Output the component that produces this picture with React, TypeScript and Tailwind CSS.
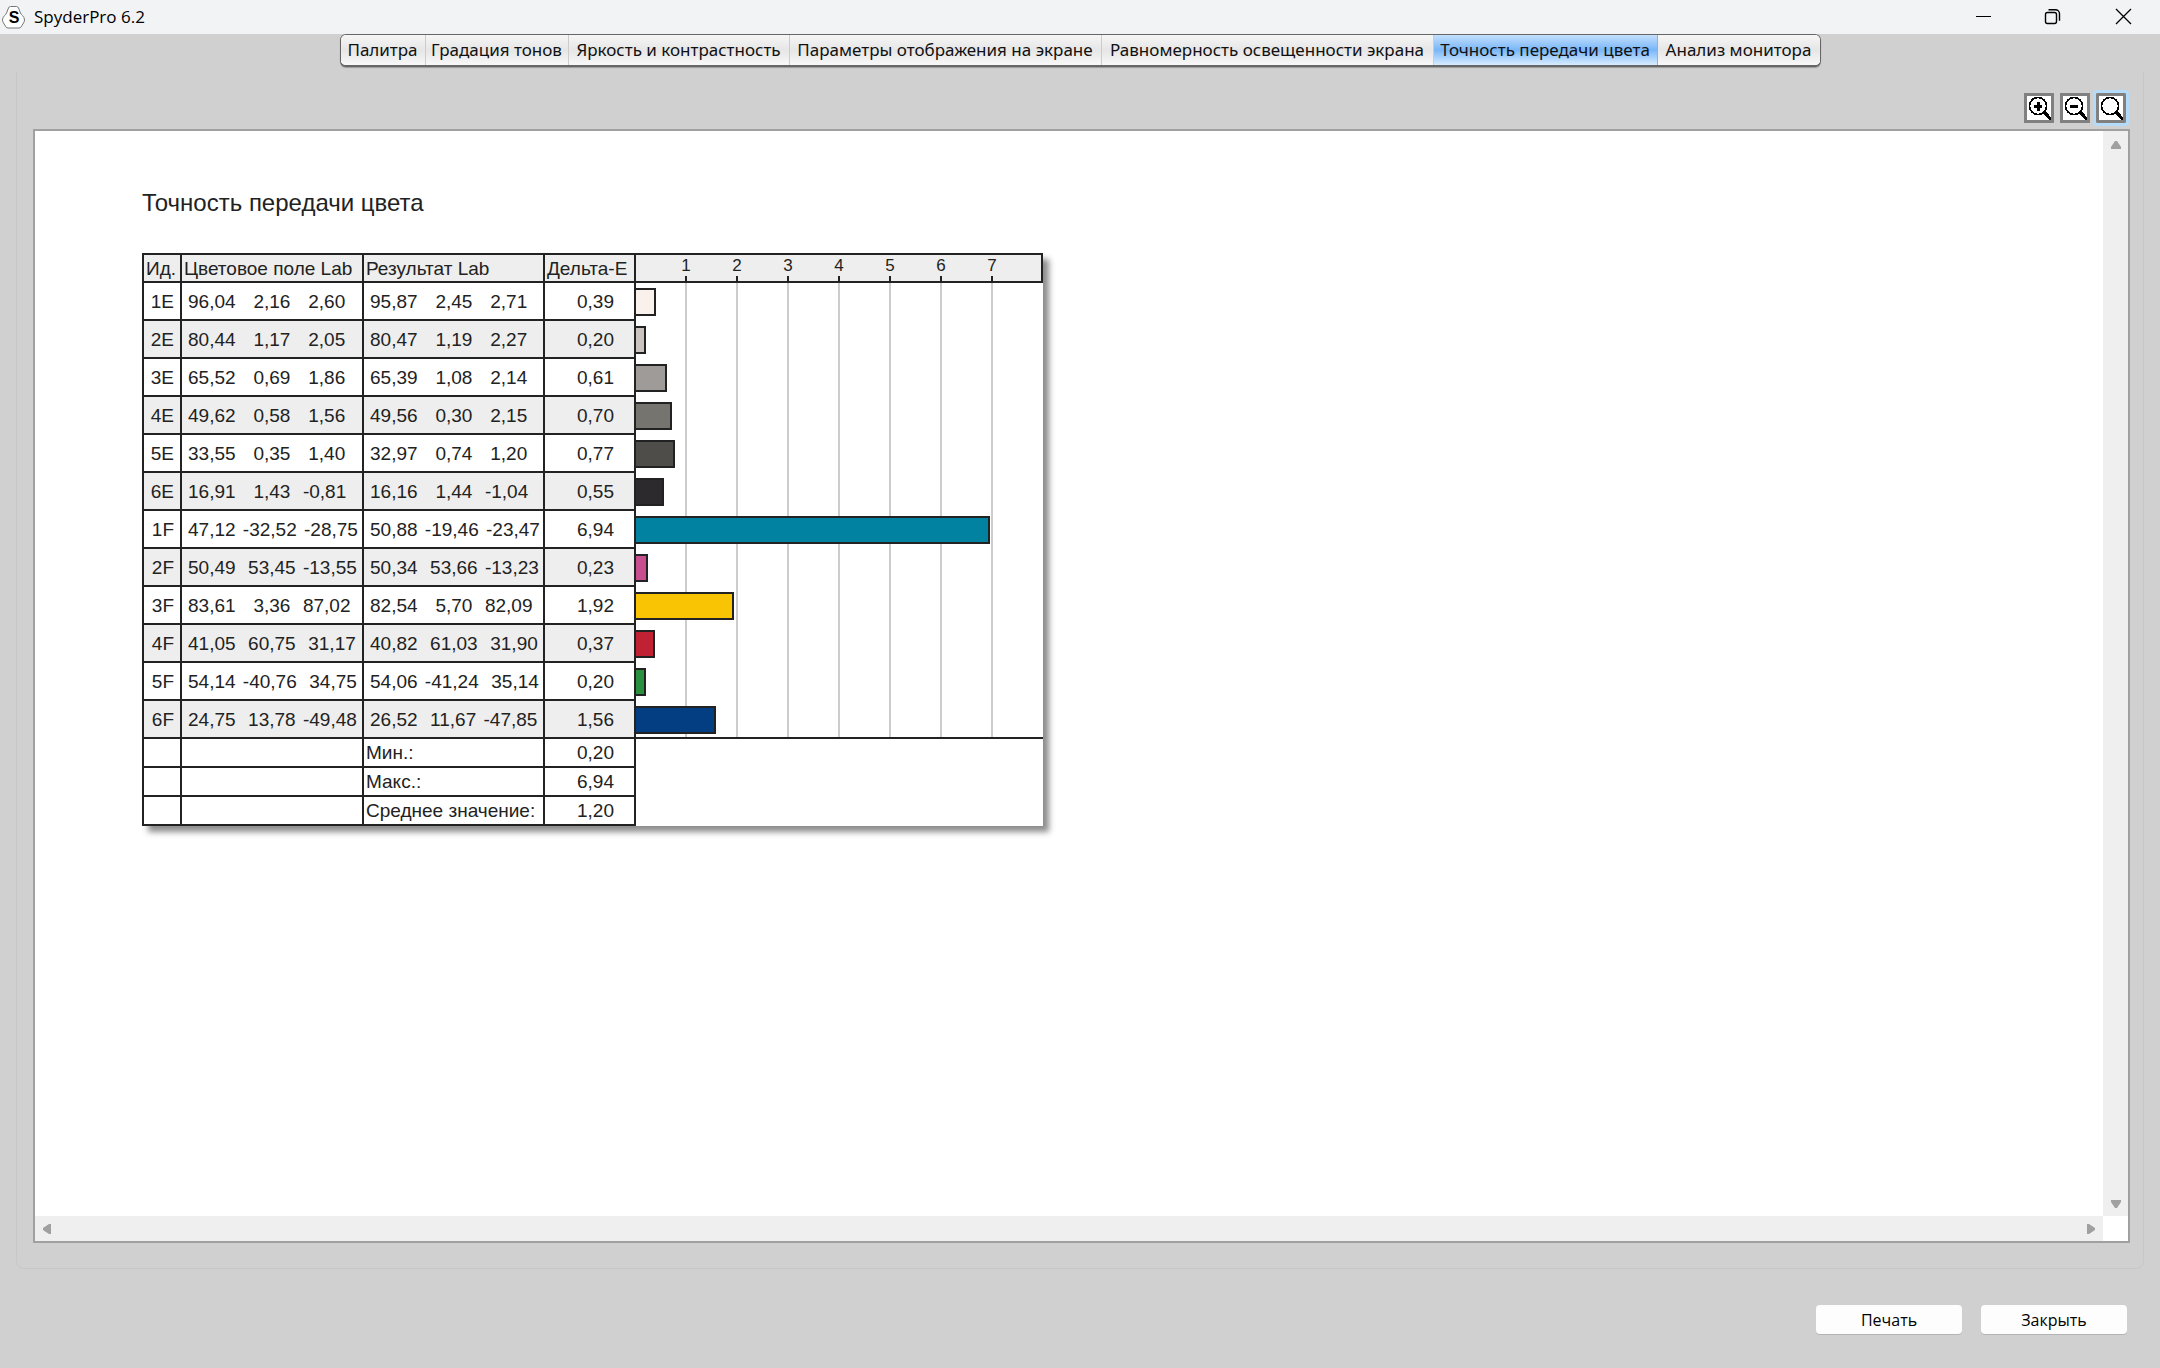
import React from 'react';

const tabs = [
  { label: 'Палитра', width: 'w-[85px]' },
  { label: 'Градация тонов', width: 'w-[143px]' },
  { label: 'Яркость и контрастность', width: 'w-[221px]' },
  { label: 'Параметры отображения на экране', width: 'w-[312px]' },
  { label: 'Равномерность освещенности экрана', width: 'w-[332px]' },
  { label: 'Точность передачи цвета', width: 'w-[224px]', active: true },
  { label: 'Анализ монитора', width: 'w-[162px]' },
];

const rows = [
  { id: '1E', source: ['96,04', '  2,16', '  2,60'], result: ['95,87', '  2,45', '  2,71'], delta: 0.39, color: '#faf0ec' },
  { id: '2E', source: ['80,44', '  1,17', '  2,05'], result: ['80,47', '  1,19', '  2,27'], delta: 0.2, color: '#c9c4c1' },
  { id: '3E', source: ['65,52', '  0,69', '  1,86'], result: ['65,39', '  1,08', '  2,14'], delta: 0.61, color: '#9f9b98' },
  { id: '4E', source: ['49,62', '  0,58', '  1,56'], result: ['49,56', '  0,30', '  2,15'], delta: 0.7, color: '#75746f' },
  { id: '5E', source: ['33,55', '  0,35', '  1,40'], result: ['32,97', '  0,74', '  1,20'], delta: 0.77, color: '#4e4d4a' },
  { id: '6E', source: ['16,91', '  1,43', ' -0,81'], result: ['16,16', '  1,44', ' -1,04'], delta: 0.55, color: '#2d2a2e' },
  { id: '1F', source: ['47,12', '-32,52', '-28,75'], result: ['50,88', '-19,46', '-23,47'], delta: 6.94, color: '#0082a0' },
  { id: '2F', source: ['50,49', ' 53,45', '-13,55'], result: ['50,34', ' 53,66', '-13,23'], delta: 0.23, color: '#c74e8f' },
  { id: '3F', source: ['83,61', '  3,36', ' 87,02'], result: ['82,54', '  5,70', ' 82,09'], delta: 1.92, color: '#f9c404' },
  { id: '4F', source: ['41,05', ' 60,75', ' 31,17'], result: ['40,82', ' 61,03', ' 31,90'], delta: 0.37, color: '#c02234' },
  { id: '5F', source: ['54,14', '-40,76', ' 34,75'], result: ['54,06', '-41,24', ' 35,14'], delta: 0.2, color: '#2b8f40' },
  { id: '6F', source: ['24,75', ' 13,78', '-49,48'], result: ['26,52', ' 11,67', '-47,85'], delta: 1.56, color: '#043e82' },
];

const summary = [
  { label: 'Мин.:', value: '0,20' },
  { label: 'Макс.:', value: '6,94' },
  { label: 'Среднее значение:', value: '1,20' },
];

const UNIT = 51;
const ROW = 38;
const HEAD = 29;

const format = (n: number) => n.toFixed(2).replace('.', ',');

function LabValues({ values }: { values: string[] }) {
  return (
    <div className="flex gap-0.5 whitespace-pre">
      <span>{values[0]}</span>
      <span> {values[1]}</span>
      <span> {values[2]}</span>
    </div>
  );
}

function Logo() {
  return (
    <svg className="w-6 h-6" viewBox="0 0 24 24">
      <path d="M8.500 1.500h6q1.500 0 2 1.500l2 5q.5 1.200 2 2.600 2 1.900 2 4.400 0 1.500-1 3l-2.500 4q-.5 1-2 1h-11q-1.500 0-2-1l-2.500-4q-1-1.500-1-3 0-2.500 2-4.400 1.500-1.400 2-2.600l2-5q.5-1.500 2-1.500z" fill="#fff" stroke="#777" />
      <text x="12" y="18" textAnchor="middle" className="font-bold text-[16px] font-['Liberation_Sans']" fill="#000">S</text>
    </svg>
  );
}

function ZoomIcon({ kind }: { kind: 'in' | 'out' | 'reset' }) {
  return (
    <svg className="w-6 h-6" viewBox="0 0 24 24" shapeRendering="crispEdges">
      <circle cx="11" cy="10" r="8.500" fill="none" stroke="#000" strokeWidth="1.600" />
      <path d="M16.500 15.500l8 8.500" stroke="#000" strokeWidth="3.200" />
      {kind !== 'reset' && <path d="M7 9h8v3h-8z" fill="#000" />}
      {kind === 'in' && <path d="M10 6h3v9h-3z" fill="#000" />}
    </svg>
  );
}

function DeltaChart() {
  const bottom = HEAD + rows.length * ROW;
  return (
    <svg className="block shrink-0" width="407" height="573" viewBox="0 0 407 573" fontFamily="Liberation Sans, sans-serif">
      <rect width="407" height="573" fill="#fff" />
      <rect x="-2" y="1" width="408" height="28" fill="#eee" stroke="#222" strokeWidth="2" />
      {[1, 2, 3, 4, 5, 6, 7].map(n => (
        <g key={n}>
          <rect x={n * UNIT - 2} y={HEAD + 1} width="2" height={bottom - HEAD} fill="#ccc" />
          <rect x={n * UNIT - 2} y="23" width="2" height="6" fill="#222" />
          <text x={n * UNIT - 1} y="18" textAnchor="middle" fontSize="17" fill="#222">{n}</text>
        </g>
      ))}
      {rows.map((row, i) => (
        <rect
          key={row.id}
          x="-1"
          y={HEAD + i * ROW + 7}
          width={Math.round(row.delta * UNIT)}
          height="26"
          fill={row.color}
          stroke="#222"
          strokeWidth="2"
        />
      ))}
      <rect y={bottom - 1} width="407" height="2" fill="#222" />
    </svg>
  );
}

function ResultTable() {
  return (
    <table className="table-fixed border-collapse w-[492px] shrink-0 text-[19px] leading-[22px] text-[#222] [&_td]:border-2 [&_th]:border-2 [&_td]:border-[#222] [&_th]:border-[#222] [&_td]:p-0 [&_th]:p-0">
      <colgroup>
        <col className="w-[38px]" />
        <col className="w-[182px]" />
        <col className="w-[181px]" />
        <col className="w-[91px]" />
      </colgroup>
      <thead>
        <tr className="h-[28px] bg-[#eee] text-left whitespace-nowrap [&_th]:font-normal">
          <th><div className="pl-0.5 pt-0.5">Ид.</div></th>
          <th><div className="pl-0.5 pt-0.5">Цветовое поле Lab</div></th>
          <th><div className="pl-0.5 pt-0.5">Результат Lab</div></th>
          <th><div className="pl-0.5 pt-0.5">Дельта-E</div></th>
        </tr>
      </thead>
      <tbody>
        {rows.map(row => (
          <tr key={row.id} className="h-[38px] even:bg-[#eee]">
            <td><div className="pt-0.5 pr-1.5 text-right">{row.id}</div></td>
            <td><div className="pt-0.5 pl-1.5"><LabValues values={row.source} /></div></td>
            <td><div className="pt-0.5 pl-1.5"><LabValues values={row.result} /></div></td>
            <td><div className="pt-0.5 pr-5 text-right">{format(row.delta)}</div></td>
          </tr>
        ))}
        {summary.map(item => (
          <tr key={item.label} className="h-[29px]">
            <td></td>
            <td></td>
            <td><div className="pl-0.5 whitespace-nowrap">{item.label}</div></td>
            <td><div className="pr-5 text-right">{item.value}</div></td>
          </tr>
        ))}
      </tbody>
    </table>
  );
}

function TitleBar() {
  return (
    <header className="h-[34px] bg-[#f1f3f4] flex items-center justify-between pl-0.5 pr-[27px]">
      <div className="flex items-center gap-2">
        <Logo />
        <h1 className="font-['Open_Sans',sans-serif] text-[17px] text-black">SpyderPro 6.2</h1>
      </div>
      <div className="flex gap-[50px]">
        <button aria-label="Свернуть" className="w-5 h-5">
          <svg viewBox="0 0 20 20" stroke="#000" fill="none"><path d="M3 9.500h15" /></svg>
        </button>
        <button aria-label="Восстановить" className="w-5 h-5">
          <svg viewBox="0 0 20 20" stroke="#000" strokeWidth="1.4" fill="none">
            <rect x="2.500" y="5.500" width="11" height="11" rx="2" />
            <path d="M5.500 2.700h7a4 4 0 0 1 4 4v7" />
          </svg>
        </button>
        <button aria-label="Закрыть окно" className="w-5 h-5">
          <svg viewBox="0 0 20 20" stroke="#000" strokeWidth="1.3" fill="none"><path d="M3 2l15 15M18 2L3 17" /></svg>
        </button>
      </div>
    </header>
  );
}

function App() {
  return (
    <div className="min-h-screen flex flex-col bg-[#d0d0d0] font-['Liberation_Sans',sans-serif]">
      <TitleBar />

      <nav className="h-[38px] flex justify-center items-start">
        <div className="h-[33px] flex border border-b-2 border-[#666] rounded-md overflow-hidden shadow-[0_1px_1px_#999] bg-gray-100">
          {tabs.map(tab => (
            <button
              key={tab.label}
              className={`${tab.width} shrink-0 whitespace-nowrap font-['Noto_Sans',sans-serif] text-[17px] leading-[20px] text-[#111] border-r last:border-r-0 ${
                tab.active
                  ? 'border-[#7ab8f5] bg-linear-to-b from-[#c4dffc] via-[#78b6f8] to-[#d8ecff]'
                  : 'border-[#ccc] bg-linear-to-b from-[#f6f6f6] via-[#e6e6e6] to-[#f8f8f8]'
              }`}
            >
              {tab.label}
            </button>
          ))}
        </div>
      </nav>

      <main className="flex-1 flex flex-col mx-4 pl-4 pr-[13px] pb-[25px] border border-t-0 border-[#c8c8c8] rounded-b-lg">
        <div className="flex justify-end gap-1.5 pt-[21px] pb-1.5 pr-1">
          <button aria-label="Увеличить" className="size-[30px] bg-white border-3 border-[#808080]"><ZoomIcon kind="in" /></button>
          <button aria-label="Уменьшить" className="size-[30px] bg-white border-3 border-[#808080]"><ZoomIcon kind="out" /></button>
          <button aria-label="Сбросить масштаб" className="size-[30px] bg-white border-3 border-[#808080] outline-3 outline-[#b4dcfa] rounded-[1px]"><ZoomIcon kind="reset" /></button>
        </div>

        <div className="flex-1 grid grid-cols-[1fr_25px] grid-rows-[1fr_25px] bg-white border-2 border-[#a0a0a0]">
          <section className="pt-[57px] pl-[107px]">
            <h2 className="text-[24px] leading-[30px] text-[#222]">Точность передачи цвета</h2>
            <div className="mt-[35px] w-fit flex shadow-[6px_6px_6px_rgba(0,0,0,0.45)]">
              <ResultTable />
              <DeltaChart />
            </div>
          </section>
          <div className="bg-[#efefef] flex flex-col justify-between items-center pt-2.5 pb-2">
            <svg width="10" height="8" viewBox="0 0 10 8" fill="#a0a0a0"><path d="M4 0h2l4 6v2H0V6z" /></svg>
            <svg width="10" height="8" viewBox="0 0 10 8" fill="#a0a0a0"><path d="M4 8h2l4-6V0H0v2z" /></svg>
          </div>
          <div className="bg-[#efefef] flex justify-between items-center px-2">
            <svg width="8" height="10" viewBox="0 0 8 10" fill="#a0a0a0"><path d="M0 4v2l6 4h2V0H6z" /></svg>
            <svg width="8" height="10" viewBox="0 0 8 10" fill="#a0a0a0"><path d="M8 4v2l-6 4H0V0h2z" /></svg>
          </div>
        </div>
      </main>

      <footer className="flex justify-end gap-[19px] pt-[36px] pb-[34px] pr-[33px] font-['Open_Sans',sans-serif] text-[16px] text-black">
        <button className="w-[146px] h-[29px] bg-[#fdfdfd] rounded-sm shadow-[0_1px_0_#b4b4b4]">Печать</button>
        <button className="w-[146px] h-[29px] bg-[#fdfdfd] rounded-sm shadow-[0_1px_0_#b4b4b4]">Закрыть</button>
      </footer>
    </div>
  );
}

export default App;
